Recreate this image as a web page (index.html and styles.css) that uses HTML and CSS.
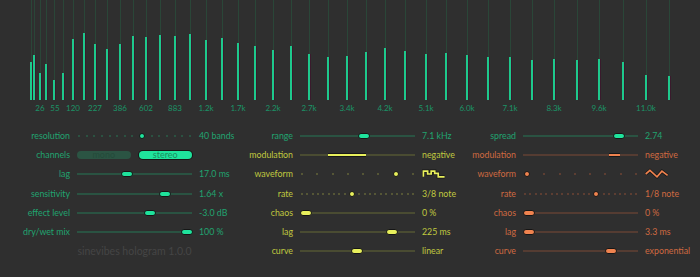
FILE: index.html
```html
<!DOCTYPE html>
<html>
<head>
<meta charset="utf-8">
<title>sinevibes hologram</title>
<link rel="stylesheet" href="styles.css">
</head>
<body>
<div class="plugin">
  <svg class="spectrum" width="700" height="126" viewBox="0 0 700 126">
    <path class="faint" d="M31.5 0V62M34.5 0V55M40.5 0V73M46.5 0V64M54.5 0V80M63.5 0V73M73.5 0V39M84.5 0V33M95.5 0V44M107.5 0V49M120.5 0V44M133.5 0V36M146.5 0V37M160.5 0V35M175.5 0V36M190.5 0V34M206.5 0V40M222.5 0V38M238.5 0V43M255.5 0V46M273.5 0V50M291.5 0V46M309.5 0V54M328.5 0V57M347.5 0V56M366.5 0V52M385.5 0V48M405.5 0V51M426.5 0V54M446.5 0V53M467.5 0V55M488.5 0V57M510.5 0V57M532.5 0V60M554.5 0V59M577.5 0V60M599.5 0V59M623.5 0V62M646.5 0V75M669.5 0V76"/>
    <path class="shade" d="M32.5 62V100M35.5 55V100M41.5 73V100M47.5 64V100M55.5 80V100M64.5 73V100M74.5 39V100M85.5 33V100M96.5 44V100M108.5 49V100M121.5 44V100M134.5 36V100M147.5 37V100M161.5 35V100M176.5 36V100M191.5 34V100M207.5 40V100M223.5 38V100M239.5 43V100M256.5 46V100M274.5 50V100M292.5 46V100M310.5 54V100M329.5 57V100M348.5 56V100M367.5 52V100M386.5 48V100M406.5 51V100M427.5 54V100M447.5 53V100M468.5 55V100M489.5 57V100M511.5 57V100M533.5 60V100M555.5 59V100M578.5 60V100M600.5 59V100M624.5 62V100M647.5 75V100M670.5 76V100"/>
    <path class="bar" d="M31 62V100M34 55V100M40 73V100M46 64V100M54 80V100M63 73V100M73 39V100M84 33V100M95 44V100M107 49V100M120 44V100M133 36V100M146 37V100M160 35V100M175 36V100M190 34V100M206 40V100M222 38V100M238 43V100M255 46V100M273 50V100M291 46V100M309 54V100M328 57V100M347 56V100M366 52V100M385 48V100M405 51V100M426 54V100M446 53V100M467 55V100M488 57V100M510 57V100M532 60V100M554 59V100M577 60V100M599 59V100M623 62V100M646 75V100M669 76V100"/>
    <g class="freq">
      <text x="40" y="111">26</text>
      <text x="55" y="111">55</text>
      <text x="73" y="111">120</text>
      <text x="95" y="111">227</text>
      <text x="120" y="111">386</text>
      <text x="146" y="111">602</text>
      <text x="175" y="111">883</text>
      <text x="206" y="111">1.2k</text>
      <text x="238" y="111">1.7k</text>
      <text x="273" y="111">2.2k</text>
      <text x="309" y="111">2.7k</text>
      <text x="347" y="111">3.4k</text>
      <text x="385" y="111">4.2k</text>
      <text x="426" y="111">5.1k</text>
      <text x="467" y="111">6.0k</text>
      <text x="510" y="111">7.1k</text>
      <text x="554" y="111">8.3k</text>
      <text x="599" y="111">9.6k</text>
      <text x="646" y="111">11.0k</text>
    </g>
  </svg>

  <div class="controls">
    <div class="col">
      <div class="row g">
        <span class="label">resolution</span>
        <div class="dots">
          <i></i><i></i><i></i><i></i><i></i><i></i><i></i><i></i><i class="on"></i><i></i><i></i><i></i><i></i><i></i><i></i>
        </div>
        <span class="value">40 bands</span>
      </div>
      <div class="row g">
        <span class="label">channels</span>
        <div class="switch"><span class="btn">mono</span><span class="btn on">stereo</span></div>
        <span class="value"></span>
      </div>
      <div class="row g">
        <span class="label">lag</span>
        <div class="slider"><span class="thumb" style="left:50px"></span></div>
        <span class="value">17.0 ms</span>
      </div>
      <div class="row g">
        <span class="label">sensitivity</span>
        <div class="slider"><span class="thumb" style="left:88px"></span></div>
        <span class="value">1.64 x</span>
      </div>
      <div class="row g">
        <span class="label">effect level</span>
        <div class="slider"><span class="thumb" style="left:73px"></span></div>
        <span class="value">-3.0 dB</span>
      </div>
      <div class="row g">
        <span class="label">dry/wet mix</span>
        <div class="slider"><span class="thumb" style="left:110px"></span></div>
        <span class="value">100 %</span>
      </div>
      <div class="row">
        <span class="label"></span>
        <span class="title">sinevibes hologram 1.0.0</span>
        <span class="value"></span>
      </div>
    </div>

    <div class="col">
      <div class="row g">
        <span class="label">range</span>
        <div class="slider"><span class="thumb" style="left:64px"></span></div>
        <span class="value">7.1 kHz</span>
      </div>
      <div class="row y">
        <span class="label">modulation</span>
        <div class="slider"><span class="seg" style="left:28px;width:38px"></span></div>
        <span class="value">negative</span>
      </div>
      <div class="row y">
        <span class="label">waveform</span>
        <div class="dots">
          <i></i><i></i><i></i><i></i><i></i><i></i><i class="on"></i><i></i>
        </div>
        <span class="value">
          <svg class="wave" width="34" height="12" viewBox="0 0 34 12">
            <polyline class="outline" points="2,10 2,2 8,2 8,6 13,6 13,2 18,2 18,5 23,5 23,10 32,10"/>
            <polyline class="stroke" points="2,10 2,2 8,2 8,6 13,6 13,2 18,2 18,5 23,5 23,10 32,10"/>
          </svg>
        </span>
      </div>
      <div class="row y">
        <span class="label">rate</span>
        <div class="dots">
          <i></i><i></i><i></i><i></i><i></i><i></i><i></i><i></i><i></i><i class="on"></i><i></i><i></i><i></i><i></i><i></i><i></i><i></i><i></i><i></i><i></i><i></i>
        </div>
        <span class="value">3/8 note</span>
      </div>
      <div class="row y">
        <span class="label">chaos</span>
        <div class="slider"><span class="thumb" style="left:6px"></span></div>
        <span class="value">0 %</span>
      </div>
      <div class="row y">
        <span class="label">lag</span>
        <div class="slider"><span class="thumb" style="left:92px"></span></div>
        <span class="value">225 ms</span>
      </div>
      <div class="row y">
        <span class="label">curve</span>
        <div class="slider"><span class="thumb" style="left:57px"></span></div>
        <span class="value">linear</span>
      </div>
    </div>

    <div class="col">
      <div class="row g">
        <span class="label">spread</span>
        <div class="slider"><span class="thumb" style="left:96px"></span></div>
        <span class="value">2.74</span>
      </div>
      <div class="row o">
        <span class="label">modulation</span>
        <div class="slider"><span class="seg" style="left:86px;width:11px"></span></div>
        <span class="value">negative</span>
      </div>
      <div class="row o">
        <span class="label">waveform</span>
        <div class="dots">
          <i class="on"></i><i></i><i></i><i></i><i></i><i></i><i></i><i></i>
        </div>
        <span class="value">
          <svg class="wave" width="34" height="12" viewBox="0 0 34 12">
            <polyline class="outline" points="1,6 7,1 17,10 24,2 32,8"/>
            <polyline class="stroke" points="1,6 7,1 17,10 24,2 32,8"/>
          </svg>
        </span>
      </div>
      <div class="row o">
        <span class="label">rate</span>
        <div class="dots">
          <i></i><i></i><i></i><i></i><i></i><i></i><i></i><i></i><i></i><i></i><i></i><i></i><i></i><i class="on"></i><i></i><i></i><i></i><i></i><i></i><i></i><i></i>
        </div>
        <span class="value">1/8 note</span>
      </div>
      <div class="row o">
        <span class="label">chaos</span>
        <div class="slider"><span class="thumb" style="left:6px"></span></div>
        <span class="value">0 %</span>
      </div>
      <div class="row o">
        <span class="label">lag</span>
        <div class="slider"><span class="thumb" style="left:6px"></span></div>
        <span class="value">3.3 ms</span>
      </div>
      <div class="row o">
        <span class="label">curve</span>
        <div class="slider"><span class="thumb" style="left:88px"></span></div>
        <span class="value">exponential</span>
      </div>
    </div>
  </div>
</div>
</body>
</html>
```

FILE: styles.css
```css
html, body {
  margin: 0;
  padding: 0;
  background: #2f2f2f;
}

body {
  font-family: Lato, "Open Sans", "DejaVu Sans", sans-serif;
}

.plugin {
  width: 700px;
  height: 277px;
  overflow: hidden;
  background: #2f2f2f;
}

.spectrum {
  display: block;
}

.spectrum path {
  fill: none;
}

.spectrum .faint {
  stroke: #2a4638;
  stroke-width: 1;
}

.spectrum .shade {
  stroke: #3a1a2c;
  stroke-width: 1;
}

.spectrum .bar {
  stroke: #1ec98c;
  stroke-width: 2;
}

.spectrum .freq text {
  fill: #1b9467;
  font-family: Lato, "Open Sans", sans-serif;
  font-size: 8px;
  text-anchor: middle;
}

.controls {
  display: flex;
}

.col {
  width: 223px;
  display: flex;
  flex-direction: column;
}

.row {
  display: grid;
  grid-template-columns: 70px 115px 24px;
  column-gap: 7px;
  align-items: center;
  height: 19.3px;
  white-space: nowrap;
}

.g {
  --text: #21a470;
  --fg: #1fe39c;
  --track: #2a5342;
  --dot: #2b5f49;
}

.y {
  --text: #c0c93f;
  --fg: #e8f05c;
  --track: #4a4c32;
  --dot: #63653a;
}

.o {
  --text: #d06a41;
  --fg: #f0834f;
  --track: #553c32;
  --dot: #6e4534;
}

.label {
  text-align: right;
  color: var(--text);
  font-size: 8.8px;
  line-height: 12px;
}

.value {
  color: var(--text);
  font-size: 8.8px;
  line-height: 12px;
  display: flex;
  align-items: center;
}

.slider {
  position: relative;
  height: 2px;
  background: var(--track);
}

.thumb {
  position: absolute;
  top: 50%;
  width: 10px;
  height: 4px;
  border: 1px solid #161616;
  border-radius: 3px;
  background: var(--fg);
  transform: translate(-50%, -50%);
}

.seg {
  position: absolute;
  top: 50%;
  height: 2px;
  border-top: 1px solid #181818;
  border-bottom: 1px solid #181818;
  background: var(--fg);
  transform: translateY(-50%);
}

.dots {
  display: flex;
  justify-content: space-between;
  align-items: center;
  height: 8px;
  padding: 0 1px;
}

.dots i {
  display: block;
  width: 2px;
  height: 2px;
  border-radius: 50%;
  background: var(--dot);
}

.dots i.on {
  width: 4px;
  height: 4px;
  border: 1px solid #161616;
  background: var(--fg);
}

.switch {
  display: flex;
  gap: 8px;
}

.btn {
  flex: 1;
  height: 8px;
  border-radius: 4px;
  background: #2b5443;
  color: #244a3a;
  font-size: 9px;
  line-height: 8px;
  text-align: center;
}

.btn.on {
  background: #1fe39c;
  color: #1a8f60;
  box-shadow: 0 0 0 1px #161616;
}

.title {
  text-align: center;
  color: #454545;
  font-size: 10.5px;
  line-height: 12px;
}

.wave {
  display: block;
}

.wave polyline {
  fill: none;
  stroke-linejoin: miter;
}

.wave .outline {
  stroke: #161616;
  stroke-width: 4.4;
}

.wave .stroke {
  stroke: var(--fg);
  stroke-width: 2.4;
}
```
